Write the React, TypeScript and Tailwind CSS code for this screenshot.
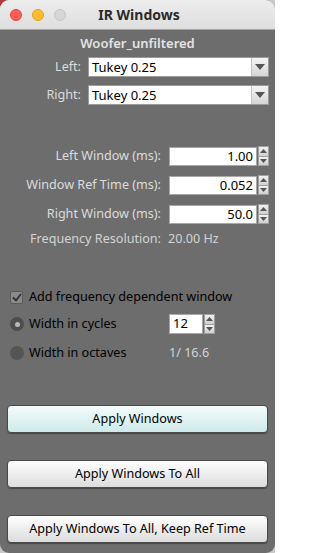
import React from "react";

const font = { fontFamily: '"Noto Sans", "DejaVu Sans", sans-serif' };

function Combo({ value }: { value: string }) {
  return (
    <div className="flex h-[20px] w-[181px] bg-white border border-[#9a9a9a]">
      <div className="flex-1 flex items-center pl-[3px] text-[13px] text-black leading-none">{value}</div>
      <div className="w-[17px] h-full flex items-center justify-center bg-gradient-to-b from-[#f4f4f4] to-[#d6d6d6] border-l border-[#c4c4c4]">
        <svg width="10" height="6" viewBox="0 0 10 6"><path d="M0 0H10L5 6Z" fill="#555" /></svg>
      </div>
    </div>
  );
}

function Spinner() {
  return (
    <div className="flex flex-col w-[11px] h-[20px] ml-[1px]">
      <div className="flex-1 flex items-center justify-center bg-gradient-to-b from-[#f2f2f2] to-[#cfcfcf] border border-[#a0a0a0]">
        <svg width="7" height="4" viewBox="0 0 7 4"><path d="M0 4H7L3.5 0Z" fill="#555" /></svg>
      </div>
      <div className="flex-1 flex items-center justify-center bg-gradient-to-b from-[#f2f2f2] to-[#cfcfcf] border border-t-0 border-[#a0a0a0]">
        <svg width="7" height="4" viewBox="0 0 7 4"><path d="M0 0H7L3.5 4Z" fill="#555" /></svg>
      </div>
    </div>
  );
}

function NumRow({ label, value }: { label: string; value: string }) {
  return (
    <div className="flex items-center h-[20px]">
      <div className="w-[162px] text-right text-[12.6px] text-[#dcdcdc] leading-none pr-[1px]">{label}</div>
      <div className="ml-[7px] w-[88px] h-[19px] bg-white border border-[#a8a8a8] flex items-center justify-end pr-[3px] text-[13px] text-black leading-none">{value}</div>
      <Spinner />
    </div>
  );
}

function Btn({ label, primary }: { label: string; primary?: boolean }) {
  return (
    <div
      className={
        "mx-[7px] h-[28px] rounded-[4px] border border-[#4a4a4a] flex items-center justify-center text-[12.6px] text-black shadow-[0_1px_1px_rgba(0,0,0,0.35)] " +
        (primary
          ? "bg-gradient-to-b from-[#f3fbfb] to-[#cfe9ea]"
          : "bg-gradient-to-b from-[#ffffff] to-[#dcdcdc]")
      }
    >
      {label}
    </div>
  );
}

export default function App() {
  return (
    <div className="w-[275px] h-[553px] bg-[#c9c9c9] relative overflow-hidden" style={font}>
      <div className="absolute left-0 top-0 w-[6px] h-[6px] bg-[#b33a3a]" />
      <div className="absolute inset-0 rounded-[9px] overflow-hidden flex flex-col bg-[#6d6d6d]">
        {/* title bar */}
        <div className="h-[30px] shrink-0 bg-gradient-to-b from-[#ededed] to-[#dedede] border-b border-[#a5a5a5] flex items-center relative">
          <div className="flex items-center gap-[10px] pl-[10px]">
            <div className="w-[12px] h-[12px] rounded-full bg-[#fe5f57] border border-[#e0443e]" />
            <div className="w-[12px] h-[12px] rounded-full bg-[#febc2e] border border-[#dea123]" />
            <div className="w-[12px] h-[12px] rounded-full bg-[#d6d6d6] border border-[#c4c4c4]" />
          </div>
          <div className="absolute inset-0 flex items-center justify-center pl-[3px] text-[14px] font-bold text-[#2a2a2a]">IR Windows</div>
        </div>

        <div className="flex flex-col">
          <div className="mt-[6px] h-[16px] flex items-center justify-center text-[13px] font-semibold text-[#e4e4e4]">Woofer_unfiltered</div>

          <div className="mt-[5px] flex items-center">
            <div className="w-[81px] text-right text-[12.6px] text-[#dcdcdc]">Left:</div>
            <div className="ml-[7px]"><Combo value="Tukey 0.25" /></div>
          </div>
          <div className="mt-[8px] flex items-center">
            <div className="w-[81px] text-right text-[12.6px] text-[#dcdcdc]">Right:</div>
            <div className="ml-[7px]"><Combo value="Tukey 0.25" /></div>
          </div>

          <div className="mt-[41px] flex flex-col gap-[9px]">
            <NumRow label="Left Window (ms):" value="1.00" />
            <NumRow label="Window Ref Time (ms):" value="0.052" />
            <NumRow label="Right Window (ms):" value="50.0" />
          </div>
          <div className="mt-[5px] flex items-center h-[20px] text-[12.6px] text-[#d4d4d4]">
            <div className="w-[162px] text-right pr-[1px]">Frequency Resolution:</div>
            <div className="ml-[6px]">20.00 Hz</div>
          </div>

          <div className="mt-[38px] flex items-center h-[20px]">
            <div className="ml-[10px] w-[13px] h-[13px] rounded-[2px] bg-[#8a8a8a] border border-[#5a5a5a] flex items-center justify-center">
              <svg width="10" height="9" viewBox="0 0 10 9"><path d="M1 4.5L4 7.5L9 1" stroke="#2e2e2e" strokeWidth="1.8" fill="none" /></svg>
            </div>
            <div className="ml-[6px] text-[12.6px] text-black">Add frequency dependent window</div>
          </div>
          <div className="mt-[7px] flex items-center h-[20px]">
            <div className="ml-[10px] w-[14px] h-[14px] rounded-full bg-[#4e4e4e] flex items-center justify-center">
              <div className="w-[5px] h-[5px] rounded-full bg-[#b8b8b8]" />
            </div>
            <div className="ml-[5px] w-[140px] text-[12.6px] text-black">Width in cycles</div>
            <div className="w-[34px] h-[20px] bg-white border border-[#a8a8a8] flex items-center pl-[3px] text-[13px] text-black">12</div>
            <Spinner />
          </div>
          <div className="mt-[9px] flex items-center h-[20px]">
            <div className="ml-[10px] w-[14px] h-[14px] rounded-full bg-[#555555]" />
            <div className="ml-[5px] w-[140px] text-[12.6px] text-black">Width in octaves</div>
            <div className="text-[12.6px] text-[#d4d4d4]">1/ 16.6</div>
          </div>

          <div className="mt-[42px] flex flex-col gap-[27px]">
            <Btn label="Apply Windows" primary />
            <Btn label="Apply Windows To All" />
            <Btn label="Apply Windows To All, Keep Ref Time" />
          </div>
        </div>
      </div>
    </div>
  );
}
